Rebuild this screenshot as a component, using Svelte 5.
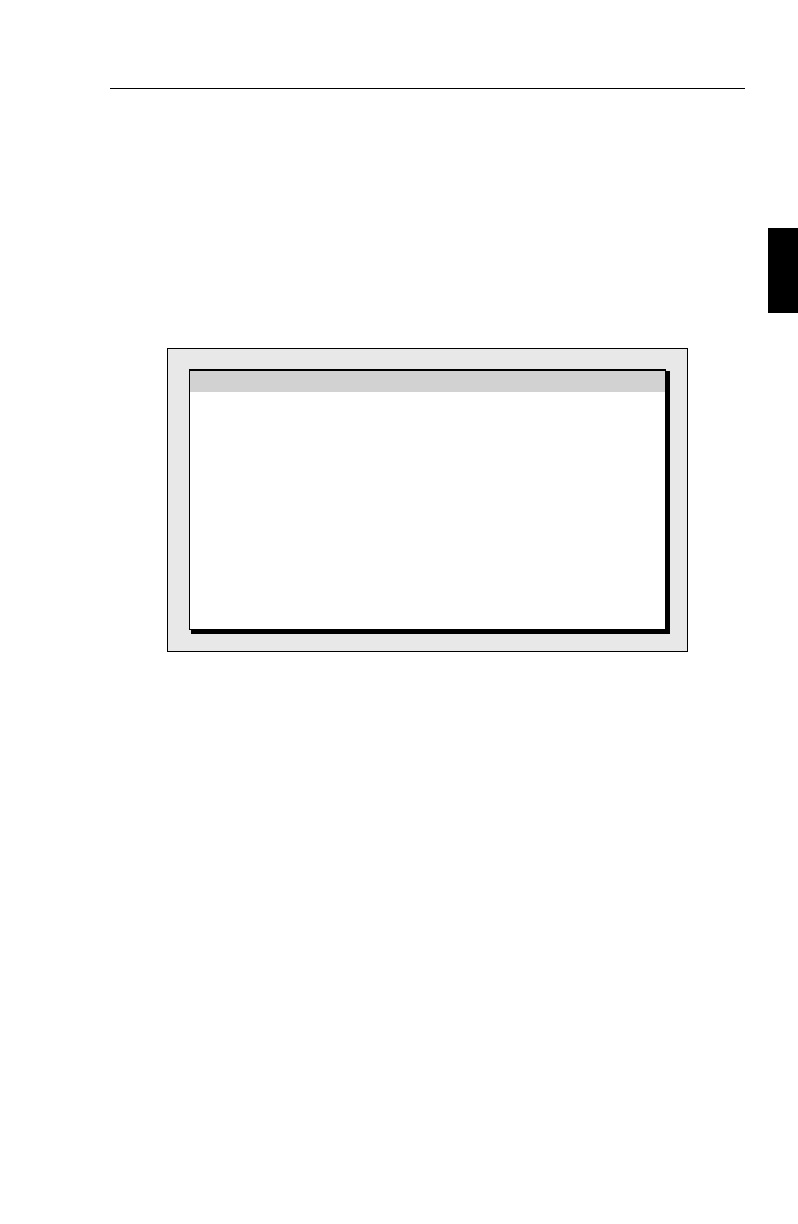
<script>
  let { title = '', text = '' } = $props()
</script>

<div class="page">
  <header class="page-header"></header>

  <aside class="chapter-tab"></aside>

  <main class="content">
    <figure class="screen">
      <section class="dialog">
        <div class="title-bar">{title}</div>
        <div class="dialog-body">{text}</div>
      </section>
    </figure>
  </main>
</div>

<style>
:global(body) {
  margin: 0;
  background: #ffffff;
}

.page {
  display: flex;
  flex-direction: column;
  min-height: 100vh;
  box-sizing: border-box;
  padding-top: 88px;
  font-family: "Liberation Sans", Arial, sans-serif;
  font-size: 14px;
  color: #000000;
}

.page-header {
  margin: 0 53px 0 110px;
  border-top: 1px solid #000000;
}

.chapter-tab {
  align-self: flex-end;
  width: 30px;
  height: 85px;
  margin-top: 139px;
  background: #000000;
}

.content {
  margin: 35px 53px 0 110px;
}

.screen {
  margin: 0 57px;
  padding: 20px 21px 21px;
  background: #e8e8e8;
  border: 1px solid #000000;
}

.dialog {
  background: #ffffff;
  border: 1px solid #000000;
  border-top-width: 2px;
  box-shadow: 3px 3px 0 1px #000000;
}

.title-bar {
  height: 21px;
  background: #d2d2d2;
}

.dialog-body {
  min-height: 237px;
}
</style>
